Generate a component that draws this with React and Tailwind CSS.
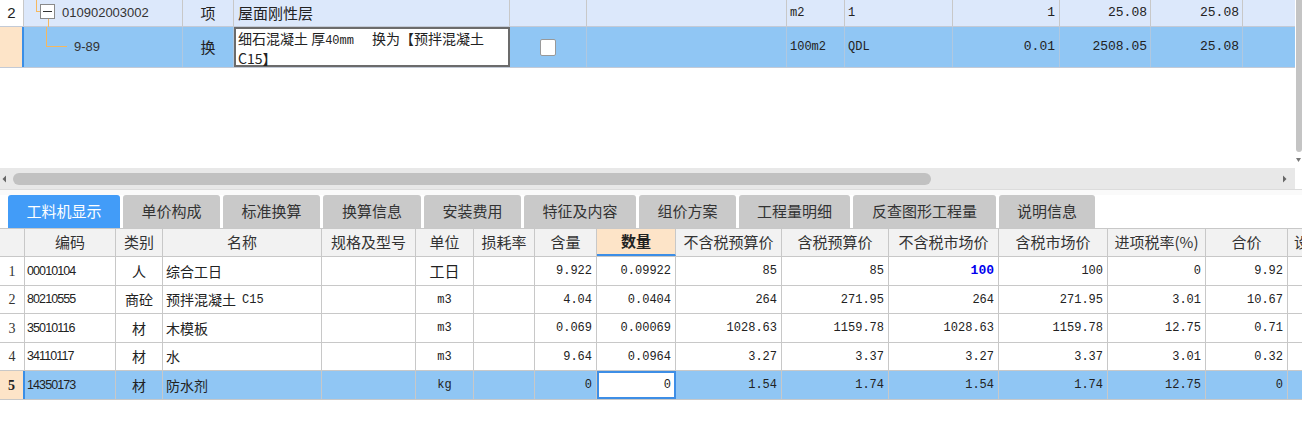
import React from "react";

const CJK = { fontFamily: '"Noto Sans CJK SC", "Noto Sans", sans-serif' };
const MONO = { fontFamily: '"Liberation Mono", "DejaVu Sans Mono", monospace' };
const SANS = { fontFamily: '"Liberation Sans", Arial, sans-serif' };

const botCols = [25, 91, 47, 159, 94, 58, 61, 62, 79, 106, 107, 110, 109, 98, 82, 20];
const headers = ["", "编码", "类别", "名称", "规格及型号", "单位", "损耗率", "含量", "数量", "不含税预算价", "含税预算价", "不含税市场价", "含税市场价", "进项税率(%)", "合价", "设"];

const rows = [
  ["1", "00010104", "人", "综合工日", "", "工日", "", "9.922", "0.09922", "85", "85", "100", "100", "0", "9.92"],
  ["2", "80210555", "商砼", "预拌混凝土 C15", "", "m3", "", "4.04", "0.0404", "264", "271.95", "264", "271.95", "3.01", "10.67"],
  ["3", "35010116", "材", "木模板", "", "m3", "", "0.069", "0.00069", "1028.63", "1159.78", "1028.63", "1159.78", "12.75", "0.71"],
  ["4", "34110117", "材", "水", "", "m3", "", "9.64", "0.0964", "3.27", "3.37", "3.27", "3.37", "3.01", "0.32"],
  ["5", "14350173", "材", "防水剂", "", "kg", "", "0", "0", "1.54", "1.74", "1.54", "1.74", "12.75", "0"],
];
const rowH = [29, 28, 29, 28, 29];

const tabs = [
  ["工料机显示", 112],
  ["单价构成", 97],
  ["标准换算", 97],
  ["换算信息", 98],
  ["安装费用", 97],
  ["特征及内容", 112],
  ["组价方案", 97],
  ["工程量明细", 111],
  ["反查图形工程量", 143],
  ["说明信息", 96],
];

function TopRow1() {
  return (
    <div className="flex h-[27px] bg-[#dce8fb] border-b border-[#c3cad6]">
      <div className="w-[24px] shrink-0 bg-white border-r border-[#c8c8c8] flex items-center justify-center text-[15px] text-[#222]" style={SANS}>2</div>
      <div className="w-[159px] shrink-0 relative border-r border-[#c8c8c8] flex items-center pl-[38px] text-[13px] text-[#333]" style={SANS}>
        <span className="absolute left-[12px] top-0 w-[1px] h-[11px] bg-[#f5b860]" />
        <span className="absolute left-[12px] top-[11px] w-[4px] h-[1px] bg-[#f5b860]" />
        <span className="absolute left-[16px] top-[4px] w-[15px] h-[15px] border border-[#8a8a8a] bg-white flex items-center justify-center">
          <span className="w-[9px] h-[1.5px] bg-[#333]" />
        </span>
        <span className="absolute left-[24px] top-[19px] w-[1px] h-[8px] bg-[#f5b860]" />
        010902003002
      </div>
      <div className="w-[51px] shrink-0 border-r border-[#c8c8c8] flex items-center justify-center text-[15px] text-[#222]" style={CJK}>项</div>
      <div className="w-[276px] shrink-0 border-r border-[#c8c8c8] flex items-center pl-[4px] text-[15px] text-[#222]" style={CJK}>屋面刚性层</div>
      <div className="w-[77px] shrink-0 border-r border-[#c8c8c8]" />
      <div className="w-[200px] shrink-0 border-r border-[#c8c8c8]" />
      <div className="w-[58px] shrink-0 border-r border-[#c8c8c8] flex items-center pl-[3px] text-[12px] text-[#222]" style={MONO}>m2</div>
      <div className="w-[108px] shrink-0 border-r border-[#c8c8c8] flex items-center pl-[3px] text-[12px] text-[#222]" style={MONO}>1</div>
      <div className="w-[107px] shrink-0 border-r border-[#c8c8c8] flex items-center justify-end pr-[4px] text-[13px] text-[#222]" style={MONO}>1</div>
      <div className="w-[91px] shrink-0 border-r border-[#c8c8c8] flex items-center justify-end pr-[3px] text-[13px] text-[#222]" style={MONO}>25.08</div>
      <div className="w-[92px] shrink-0 border-r border-[#c8c8c8] flex items-center justify-end pr-[3px] text-[13px] text-[#222]" style={MONO}>25.08</div>
      <div className="w-[52px] shrink-0" />
    </div>
  );
}

function TopRow2() {
  return (
    <div className="flex h-[41px] bg-[#90c6f4] border-b border-[#c3cad6]">
      <div className="w-[24px] shrink-0 bg-[#fde4c8] border-r-2 border-[#3a8ee6]" />
      <div className="w-[159px] shrink-0 relative border-r border-[#b0c8e0] flex items-center pl-[50px] text-[13px] text-[#333]" style={SANS}>
        <span className="absolute left-[22px] top-0 w-[1px] h-[19px] bg-[#f5b860]" />
        <span className="absolute left-[22px] top-[19px] w-[21px] h-[1px] bg-[#f5b860]" />
        9-89
      </div>
      <div className="w-[51px] shrink-0 border-r border-[#b0c8e0] flex items-center justify-center text-[15px] text-[#222]" style={CJK}>换</div>
      <div className="w-[276px] shrink-0 bg-white border-2 border-[#6b6b6b] pl-[2px] pt-[1px] text-[14px] leading-[17px] text-[#222]" style={CJK}>
        细石混凝土 厚<span className="text-[12px]" style={MONO}>40mm</span>
        <span className="inline-block w-[18px]" />换为【预拌混凝土<br />C15】
      </div>
      <div className="w-[77px] shrink-0 border-r border-[#b0c8e0] flex items-center justify-center">
        <span className="w-[16px] h-[17px] bg-white border border-[#999] rounded-[2px]" />
      </div>
      <div className="w-[200px] shrink-0 border-r border-[#b0c8e0]" />
      <div className="w-[58px] shrink-0 border-r border-[#b0c8e0] flex items-center pl-[3px] text-[12px] text-[#222]" style={MONO}>100m2</div>
      <div className="w-[108px] shrink-0 border-r border-[#b0c8e0] flex items-center pl-[3px] text-[12px] text-[#222]" style={MONO}>QDL</div>
      <div className="w-[107px] shrink-0 border-r border-[#b0c8e0] flex items-center justify-end pr-[4px] text-[13px] text-[#222]" style={MONO}>0.01</div>
      <div className="w-[91px] shrink-0 border-r border-[#b0c8e0] flex items-center justify-end pr-[3px] text-[13px] text-[#222]" style={MONO}>2508.05</div>
      <div className="w-[92px] shrink-0 border-r border-[#b0c8e0] flex items-center justify-end pr-[3px] text-[13px] text-[#222]" style={MONO}>25.08</div>
      <div className="w-[52px] shrink-0" />
    </div>
  );
}

function HeaderRow() {
  return (
    <div className="flex h-[28px] bg-[#f2f2f2] border-b border-[#c8c8c8]">
      {headers.map((h, i) => {
        const isQty = i === 8;
        if (i === 15) {
          return (
            <div key={i} className="shrink-0 flex items-center text-[15px] text-[#333] overflow-visible whitespace-nowrap pl-[6px]" style={{ width: botCols[i], ...CJK }}>
              {h}
            </div>
          );
        }
        return (
          <div
            key={i}
            className={
              isQty
                ? "shrink-0 flex items-center justify-center bg-[#fde4c8] border-r border-[#c8c8c8] border-b-2 border-b-[#3d8ee6] text-[15px] font-bold text-[#222]"
                : "shrink-0 flex items-center justify-center border-r border-[#c8c8c8] text-[15px] text-[#333]"
            }
            style={{ width: botCols[i], ...CJK }}
          >
            {h}
          </div>
        );
      })}
    </div>
  );
}

function BodyRow({ r, idx }) {
  const sel = idx === 4;
  const cellBase = "shrink-0 flex items-center border-r border-[#c8c8c8]";
  return (
    <div className={sel ? "flex bg-[#90c6f4] border-b border-[#c8c8c8]" : "flex bg-white border-b border-[#c8c8c8]"} style={{ height: rowH[idx] }}>
      {botCols.map((w, i) => {
        const v = r[i] ?? "";
        if (i === 0) {
          return (
            <div
              key={i}
              className={
                sel
                  ? "shrink-0 flex items-center justify-center bg-[#fde4c8] border-r-2 border-[#3a8ee6] text-[14px] font-bold text-[#222]"
                  : "shrink-0 flex items-center justify-center border-r border-[#c8c8c8] text-[14px] text-[#333]"
              }
              style={{ width: w, fontFamily: '"Liberation Serif", serif' }}
            >
              {v}
            </div>
          );
        }
        if (i === 1) {
          return (
            <div key={i} className={cellBase + " pl-[2px] text-[12.5px] tracking-[-0.9px] text-[#222]"} style={{ width: w, ...SANS }}>
              {v}
            </div>
          );
        }
        if (i === 2) {
          return (
            <div key={i} className={cellBase + " justify-center text-[14px] text-[#222]"} style={{ width: w, ...CJK }}>
              {v}
            </div>
          );
        }
        if (i === 3) {
          const m = v.match(/^(.*?)( C15)?$/);
          return (
            <div key={i} className={cellBase + " pl-[3px] text-[14px] text-[#222]"} style={{ width: w, ...CJK }}>
              {m[1]}
              {m[2] ? <span className="text-[12px] ml-[6px]" style={MONO}>C15</span> : null}
            </div>
          );
        }
        if (i === 5) {
          const cjk = /[\u4e00-\u9fff]/.test(v);
          return (
            <div key={i} className={cellBase + (cjk ? " justify-center text-[15px] text-[#222]" : " justify-center text-[12px] text-[#222]")} style={{ width: w, ...(cjk ? CJK : MONO) }}>
              {v}
            </div>
          );
        }
        if (i === 8 && sel) {
          return (
            <div key={i} className="shrink-0 flex items-center justify-end pr-[3px] bg-white border-2 border-[#3d8ee6] text-[12px] text-[#222]" style={{ width: w, ...MONO }}>
              {v}
            </div>
          );
        }
        if (i === 11 && idx === 0) {
          return (
            <div key={i} className={cellBase + " justify-end pr-[4px] text-[13px] font-bold text-[#0000ee]"} style={{ width: w, ...MONO }}>
              {v}
            </div>
          );
        }
        if (i === 15) {
          return <div key={i} className="shrink-0" style={{ width: w }} />;
        }
        return (
          <div key={i} className={cellBase + " justify-end pr-[4px] text-[12px] text-[#222]"} style={{ width: w, ...MONO }}>
            {v}
          </div>
        );
      })}
    </div>
  );
}

export default function App() {
  return (
    <div className="w-[1302px] h-[422px] bg-white overflow-hidden flex flex-col select-none">
      <div className="flex h-[168px] shrink-0">
        <div className="w-[1295px] flex flex-col">
          <TopRow1 />
          <TopRow2 />
        </div>
        <div className="w-[7px] flex flex-col items-end">
          <div className="w-[6px] h-[152px] bg-[#c4c4c4] rounded-b-[3px]" />
          <svg width="7" height="8" viewBox="0 0 7 8" className="mt-[4px]">
            <path d="M1 2 L6 2 L3.5 6 Z" fill="#777" />
          </svg>
        </div>
      </div>
      <div className="flex h-[21px] shrink-0">
        <div className="w-[1295px] bg-[#e8e8e8] flex items-center">
          <svg width="12" height="10" viewBox="0 0 12 10" className="shrink-0">
            <path d="M6 1.5 L6 8.5 L2.5 5 Z" fill="#666" />
          </svg>
          <div className="w-[918px] h-[12px] bg-[#c1c1c1] rounded-[6px] ml-[1px]" />
          <div className="flex-1" />
          <svg width="16" height="10" viewBox="0 0 16 10" className="shrink-0">
            <path d="M4 1.5 L4 8.5 L7.5 5 Z" fill="#666" />
          </svg>
        </div>
        <div className="flex-1 bg-white" />
      </div>
      <div className="h-[6px] shrink-0 bg-[#fafafa] border-t border-[#dcdcdc]" />
      <div className="flex h-[34px] shrink-0 pl-[8px] gap-[3px] bg-white border-b border-[#c8c8c8]">
        {tabs.map(([t, w], i) => (
          <div
            key={t}
            className={
              i === 0
                ? "h-full flex items-center justify-center rounded-t-[3px] bg-[#429cf8] text-white text-[15px]"
                : "h-full flex items-center justify-center rounded-t-[3px] bg-[#c9c9c9] text-[#333] text-[15px]"
            }
            style={{ width: w, ...CJK }}
          >
            {t}
          </div>
        ))}
      </div>
      <div className="flex flex-col">
        <HeaderRow />
        {rows.map((r, idx) => (
          <BodyRow key={idx} r={r} idx={idx} />
        ))}
      </div>
    </div>
  );
}
